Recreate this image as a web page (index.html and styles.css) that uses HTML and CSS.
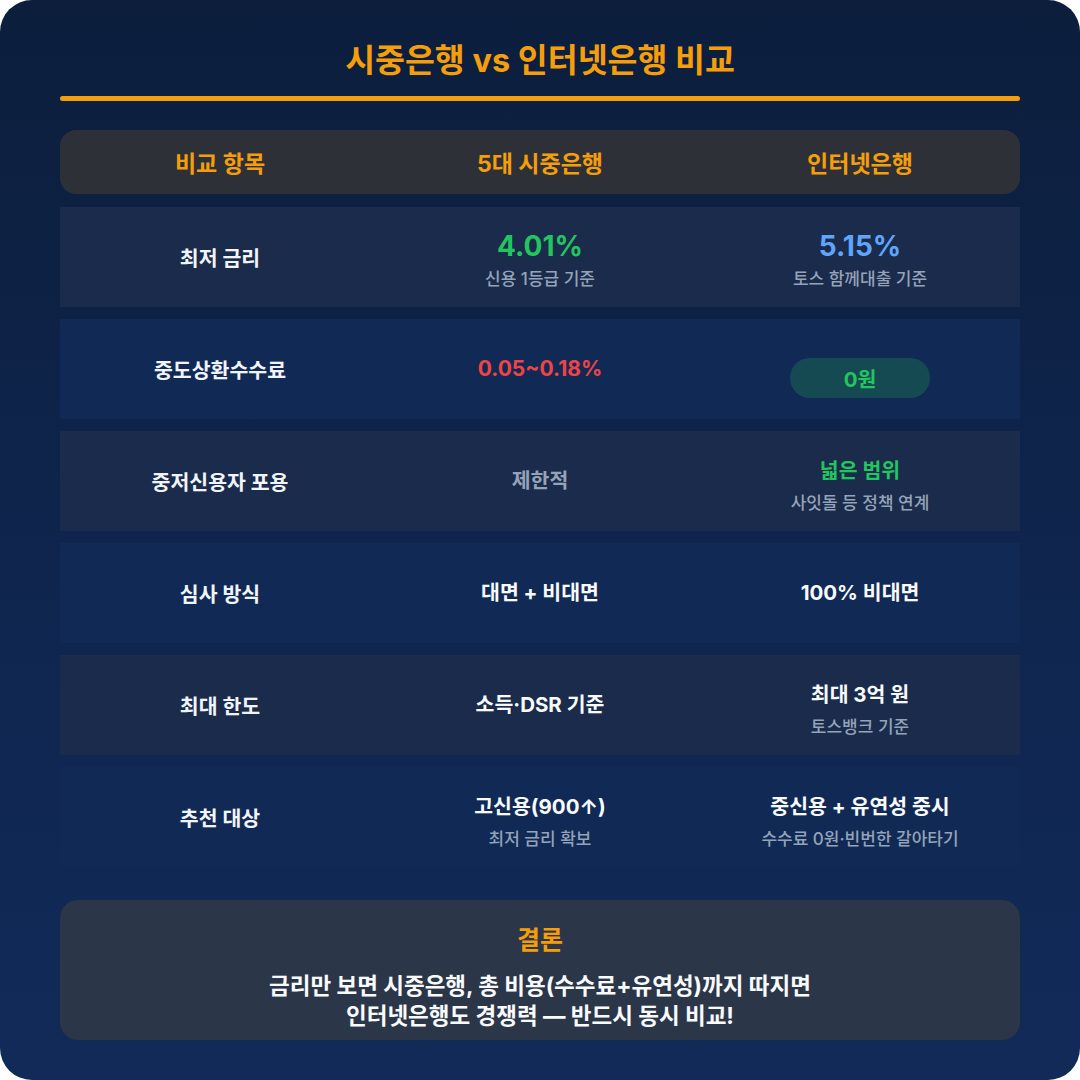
FILE: index.html
```html
<!DOCTYPE html>
<html lang="ko">
<head>
<meta charset="utf-8">
<title>시중은행 vs 인터넷은행 비교</title>
<link rel="stylesheet" href="styles.css">
</head>
<body>
<div class="card">
  <h1 class="title">시중은행 vs 인터넷은행 비교</h1>
  <div class="rule"></div>

  <div class="head">
    <div class="hcell">비교 항목</div>
    <div class="hcell">5대 시중은행</div>
    <div class="hcell">인터넷은행</div>
  </div>

  <div class="rows">
    <div class="row odd">
      <div class="cell label">최저 금리</div>
      <div class="cell stack big-stack">
        <div class="big green">4.01%</div>
        <div class="sub">신용 1등급 기준</div>
      </div>
      <div class="cell stack big-stack">
        <div class="big blue">5.15%</div>
        <div class="sub">토스 함께대출 기준</div>
      </div>
    </div>

    <div class="row even">
      <div class="cell label">중도상환수수료</div>
      <div class="cell"><span class="val red">0.05~0.18%</span></div>
      <div class="cell pill-cell"><span class="pill">0원</span></div>
    </div>

    <div class="row odd">
      <div class="cell label">중저신용자 포용</div>
      <div class="cell"><span class="val muted">제한적</span></div>
      <div class="cell stack">
        <div class="val green">넓은 범위</div>
        <div class="sub">사잇돌 등 정책 연계</div>
      </div>
    </div>

    <div class="row even">
      <div class="cell label">심사 방식</div>
      <div class="cell"><span class="val">대면 + 비대면</span></div>
      <div class="cell"><span class="val">100% 비대면</span></div>
    </div>

    <div class="row odd">
      <div class="cell label">최대 한도</div>
      <div class="cell"><span class="val">소득·DSR 기준</span></div>
      <div class="cell stack">
        <div class="val">최대 3억 원</div>
        <div class="sub">토스뱅크 기준</div>
      </div>
    </div>

    <div class="row even">
      <div class="cell label">추천 대상</div>
      <div class="cell stack">
        <div class="val">고신용(900↑)</div>
        <div class="sub">최저 금리 확보</div>
      </div>
      <div class="cell stack">
        <div class="val">중신용 + 유연성 중시</div>
        <div class="sub">수수료 0원·빈번한 갈아타기</div>
      </div>
    </div>
  </div>

  <div class="conclusion">
    <div class="c-title">결론</div>
    <p class="c-text">금리만 보면 시중은행, 총 비용(수수료+유연성)까지 따지면<br>인터넷은행도 경쟁력 — 반드시 동시 비교!</p>
  </div>
</div>
</body>
</html>
```

FILE: styles.css
```css
* { box-sizing: border-box; }

html, body {
  margin: 0;
  padding: 0;
  background: #ffffff;
}

body {
  font-family: "Inter", "Noto Sans CJK KR", "Noto Sans", sans-serif;
}

.card {
  width: 1080px;
  height: 1080px;
  border-radius: 32px;
  overflow: hidden;
  background: linear-gradient(180deg, #0c1e3c 0%, #0f2650 60%, #112a58 100%);
  padding: 40px 60px 0;
  display: flex;
  flex-direction: column;
}

.title {
  margin: 0;
  text-align: center;
  font-size: 32.5px;
  line-height: 42px;
  font-weight: 700;
  color: #f59e0b;
}

.rule {
  margin-top: 14px;
  height: 5px;
  border-radius: 3px;
  background: #f59e0b;
}

.head {
  margin-top: 29px;
  height: 64px;
  border-radius: 16px;
  background: #2d3137;
  display: grid;
  grid-template-columns: repeat(3, 1fr);
  align-items: center;
}

.hcell {
  text-align: center;
  font-size: 23px;
  font-weight: 700;
  color: #f59e0b;
}

.rows {
  margin-top: 13px;
  display: flex;
  flex-direction: column;
  gap: 12px;
}

.row {
  height: 100px;
  display: grid;
  grid-template-columns: repeat(3, 1fr);
}

.row.odd { background: #1a2b4b; }
.row.even { background: #112a55; }

.cell {
  display: flex;
  flex-direction: column;
  align-items: center;
  justify-content: center;
  text-align: center;
}

.label {
  font-size: 20.5px;
  font-weight: 700;
  color: #f1f5f9;
}

.val {
  font-size: 20.5px;
  line-height: 28px;
  font-weight: 700;
  color: #f8fafc;
}

.stack { padding-top: 10px; }
.stack .sub { margin-top: 7px; }
.big-stack { padding-top: 5px; }
.big-stack .sub { margin-top: 5px; }

.big {
  font-size: 28px;
  line-height: 34px;
  font-weight: 700;
}

.sub {
  font-size: 17px;
  line-height: 23px;
  font-weight: 500;
  color: #94a3b8;
}

.green { color: #22c55e; }
.blue { color: #60a5fa; }
.red { color: #ef4444; font-size: 21px; }
.muted { color: #94a3b8; font-weight: 600; }

.pill-cell { padding-top: 18px; }

.pill {
  width: 140px;
  height: 40px;
  border-radius: 20px;
  background: #164a52;
  color: #22c55e;
  font-size: 20.5px;
  font-weight: 700;
  display: flex;
  align-items: center;
  justify-content: center;
}

.conclusion {
  margin-top: 33px;
  height: 140px;
  border-radius: 18px;
  background: #2b3649;
  padding-top: 25px;
  text-align: center;
}

.c-title {
  font-size: 25px;
  line-height: 30px;
  font-weight: 700;
  color: #f59e0b;
}

.c-text {
  margin: 16px 0 0;
  font-size: 22.5px;
  line-height: 30px;
  font-weight: 700;
  color: #f8fafc;
}
```
